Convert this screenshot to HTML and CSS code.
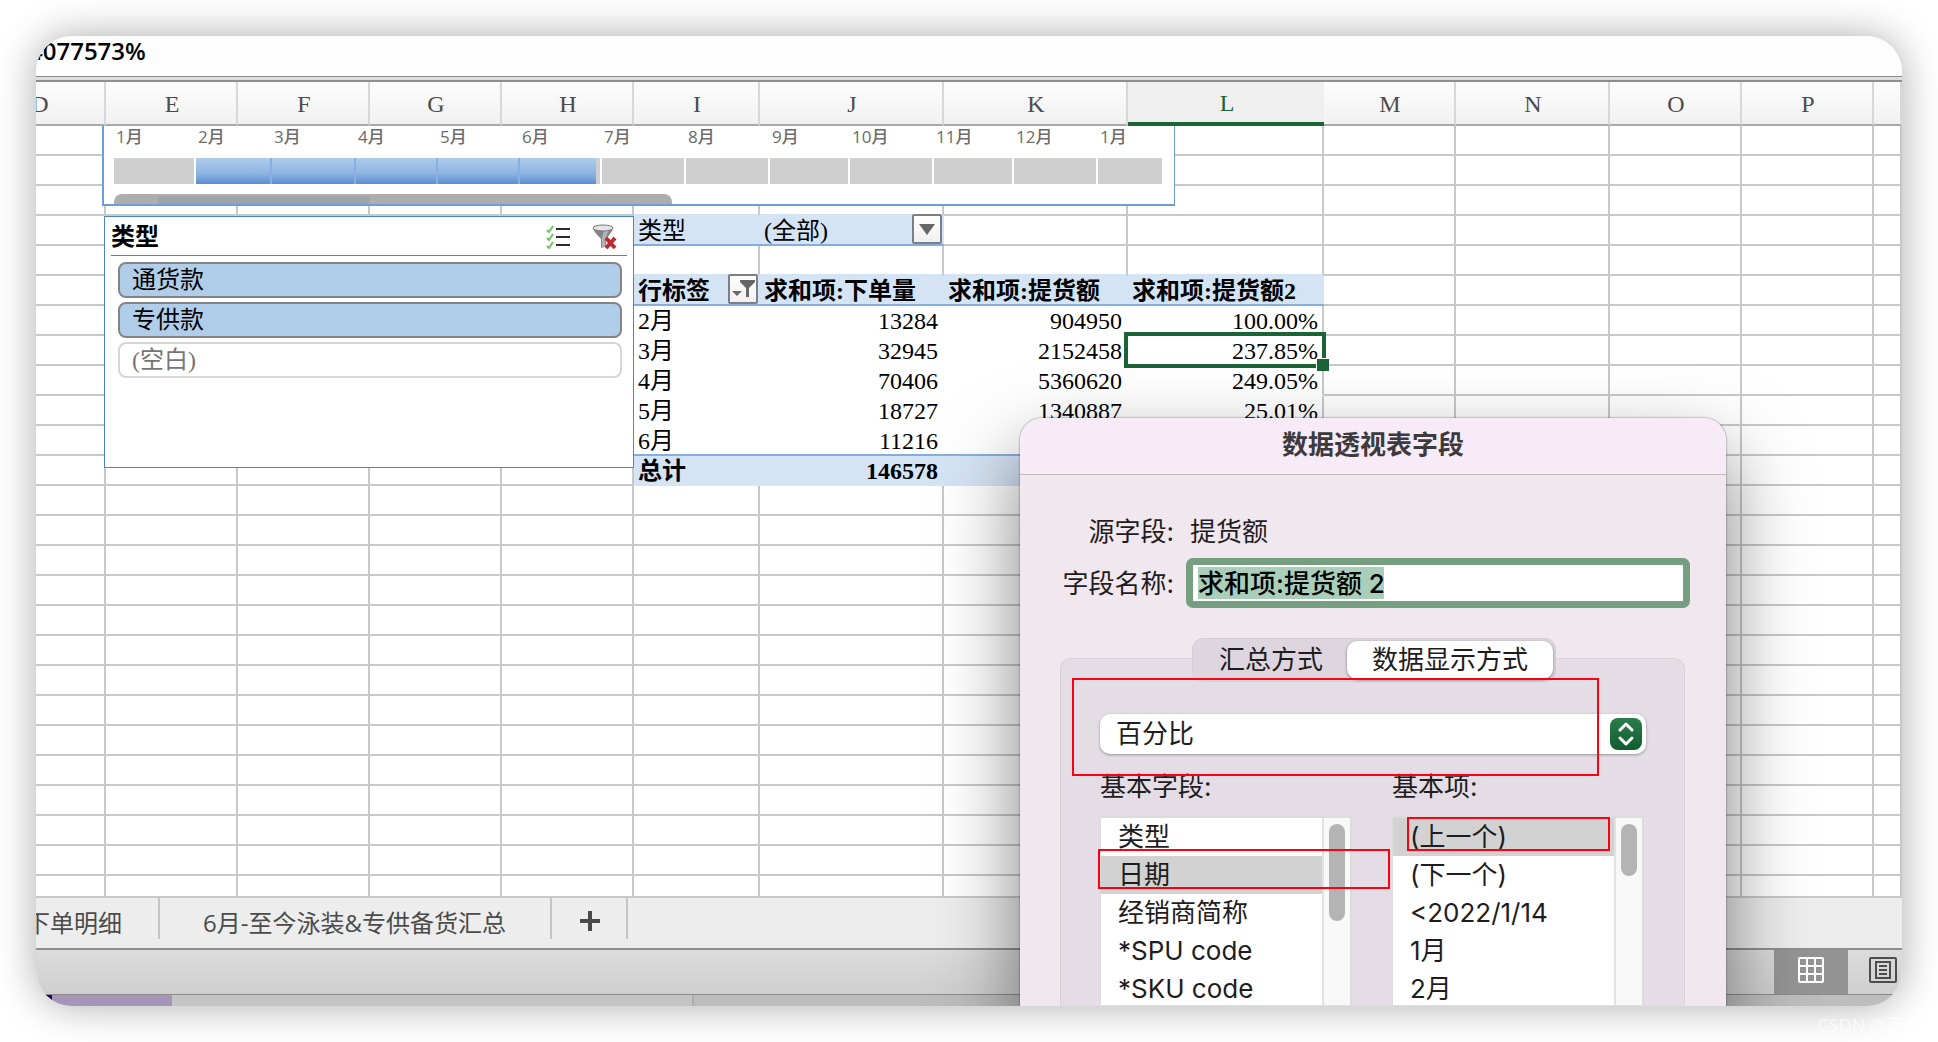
FILE: index.html
```html
<!DOCTYPE html>
<html lang="zh-CN">
<head>
<meta charset="utf-8">
<title>数据透视表</title>
<meta name="viewport" content="width=device-width, initial-scale=1">
<link rel="stylesheet" href="styles.css">
</head>
<body>
<main class="window">
  <div class="formula-bar">4077573%</div>
  <div class="divider"></div>

  <section class="sheet">
    <table class="grid">
      <colgroup>
        <col class="w132"><col class="w132"><col class="w132"><col class="w132"><col class="w132">
        <col class="w126"><col class="w184"><col class="w184"><col class="w196">
        <col class="w132"><col class="w154"><col class="w132"><col class="w132"><col>
      </colgroup>
      <thead>
        <tr><th>D</th><th>E</th><th>F</th><th>G</th><th>H</th><th>I</th><th>J</th><th>K</th><th class="active">L</th><th>M</th><th>N</th><th>O</th><th>P</th><th></th></tr>
      </thead>
      <tbody>
        <tr><td><td><td><td><td><td><td><td><td><td><td><td><td><td></tr>
        <tr><td><td><td><td><td><td><td><td><td><td><td><td><td><td></tr>
        <tr class="above-filter"><td><td><td><td><td><td><td><td><td><td><td><td><td><td></tr>
        <tr class="filter-row"><td><td><td><td><td><td class="fill">类型</td><td class="fill"><div class="cell-line">(全部)<button class="cell-button" aria-label="筛选类型"><svg width="16" height="12" viewBox="0 0 16 12"><path d="M0 1h16L8 12z" fill="#666"/></svg></button></div></td><td><td><td><td><td><td><td></tr>
        <tr class="above-head"><td><td><td><td><td><td><td><td><td><td><td><td><td><td></tr>
        <tr class="pivot-head"><td><td><td><td><td><td class="fill"><div class="cell-line">行标签<button class="cell-button" aria-label="筛选行标签"><svg width="24" height="20" viewBox="0 0 24 20"><path d="M9 1h15v2l-6 6v9h-3V9L9 3z" fill="#666"/><path d="M1 12h10l-5 5z" fill="#666"/></svg></button></div></td><td class="fill">求和项:下单量</td><td class="fill">求和项:提货额</td><td class="fill">求和项:提货额2</td><td><td><td><td><td></tr>
        <tr class="pivot-row"><td><td><td><td><td><td>2月</td><td>13284</td><td>904950</td><td>100.00%</td><td><td><td><td><td></tr>
        <tr class="pivot-row"><td><td><td><td><td><td>3月</td><td>32945</td><td>2152458</td><td class="selected">237.85%</td><td><td><td><td><td></tr>
        <tr class="pivot-row"><td><td><td><td><td><td>4月</td><td>70406</td><td>5360620</td><td>249.05%</td><td><td><td><td><td></tr>
        <tr class="pivot-row"><td><td><td><td><td><td>5月</td><td>18727</td><td>1340887</td><td>25.01%</td><td><td><td><td><td></tr>
        <tr class="pivot-row last"><td><td><td><td><td><td>6月</td><td>11216</td><td></td><td></td><td><td><td><td><td></tr>
        <tr class="pivot-total"><td><td><td><td><td><td class="fill">总计</td><td class="fill">146578</td><td class="fill"></td><td class="fill"></td><td><td><td><td><td></tr>
        <tr><td><td><td><td><td><td><td><td><td><td><td><td><td><td></tr>
        <tr><td><td><td><td><td><td><td><td><td><td><td><td><td><td></tr>
        <tr><td><td><td><td><td><td><td><td><td><td><td><td><td><td></tr>
        <tr><td><td><td><td><td><td><td><td><td><td><td><td><td><td></tr>
        <tr><td><td><td><td><td><td><td><td><td><td><td><td><td><td></tr>
        <tr><td><td><td><td><td><td><td><td><td><td><td><td><td><td></tr>
        <tr><td><td><td><td><td><td><td><td><td><td><td><td><td><td></tr>
        <tr><td><td><td><td><td><td><td><td><td><td><td><td><td><td></tr>
        <tr><td><td><td><td><td><td><td><td><td><td><td><td><td><td></tr>
        <tr><td><td><td><td><td><td><td><td><td><td><td><td><td><td></tr>
        <tr><td><td><td><td><td><td><td><td><td><td><td><td><td><td></tr>
        <tr><td><td><td><td><td><td><td><td><td><td><td><td><td><td></tr>
        <tr><td><td><td><td><td><td><td><td><td><td><td><td><td><td></tr>
        <tr class="cut"><td><td><td><td><td><td><td><td><td><td><td><td><td><td></tr>
      </tbody>
    </table>

    <div class="timeline">
      <ol class="months">
        <li>1月</li><li class="on first">2月</li><li class="on">3月</li><li class="on">4月</li><li class="on">5月</li><li class="on end">6月</li><li>7月</li><li>8月</li><li>9月</li><li>10月</li><li>11月</li><li>12月</li><li>1月</li>
      </ol>
      <div class="timeline-track"><div class="timeline-thumb"></div></div>
    </div>

    <div class="slicer">
      <header class="slicer-head">
        <h2>类型</h2>
        <button class="icon-button" aria-label="多选">
          <svg width="24" height="24" viewBox="0 0 24 24" fill="none"><path d="M1 5l2 2 4-6M1 13l2 2 4-6M1 21l2 2 4-6" stroke="#74c069" stroke-width="2"/><path d="M10 4h14M10 12h14M10 20h14" stroke="#2b2b2b" stroke-width="2"/></svg>
        </button>
        <button class="icon-button" aria-label="清除筛选器">
          <svg width="26" height="26" viewBox="0 0 26 26"><path d="M1 4q0 3 8 11v9l5-2v-7q7-8 7-11z" fill="#85858a"/><path d="M10 14l2-8 5 0-4 9v8l-3 1z" fill="#b3b3b8"/><ellipse cx="11" cy="4" rx="10" ry="3" fill="#e4e4e6" stroke="#77777b" stroke-width="1"/><path d="M14 14l9 10M23 14l-9 10" stroke="#c0292f" stroke-width="4"/></svg>
        </button>
      </header>
      <div class="slicer-items">
        <button class="slicer-item on">通货款</button>
        <button class="slicer-item on">专供款</button>
        <button class="slicer-item">(空白)</button>
      </div>
    </div>
  </section>

  <nav class="tabs">
    <button class="tab clipped">下单明细</button>
    <button class="tab">6月-至今泳装&amp;专供备货汇总</button>
    <button class="tab add" aria-label="新建工作表"><svg width="20" height="20" viewBox="0 0 20 20"><path d="M10 0v20M0 10h20" stroke="#4a4a4a" stroke-width="4"/></svg></button>
  </nav>

  <footer class="status">
    <button class="view current" aria-label="普通视图">
      <svg width="26" height="26" viewBox="0 0 26 26" fill="none" stroke="#fff" stroke-width="2"><rect x="1" y="1" width="24" height="24" rx="1"/><path d="M9 1v24M17 1v24M1 9h24M1 17h24"/></svg>
    </button>
    <button class="view" aria-label="页面布局">
      <svg width="28" height="26" viewBox="0 0 28 26" fill="none" stroke="#4d4d4d" stroke-width="2"><rect x="1" y="1" width="26" height="24" rx="1"/><rect x="7" y="5" width="14" height="16"/><path d="M10 9h8M10 13h8M10 17h8"/></svg>
    </button>
  </footer>
  <div class="desktop"><span class="navy"></span><span class="purple"></span><span class="left-part"></span><span class="right-part"></span></div>

  <form class="dialog" role="dialog" aria-labelledby="dialog-title">
    <h1 id="dialog-title">数据透视表字段</h1>
    <div class="fields">
      <span class="field-label">源字段:</span><span class="source">提货额</span>
      <label class="field-label" for="field-name">字段名称:</label><input id="field-name" type="text" value="求和项:提货额 2">
    </div>
    <div class="segments">
      <button type="button">汇总方式</button><button type="button" class="current">数据显示方式</button>
    </div>
    <div class="panel">
      <div class="popup">
        <select aria-label="数据显示方式"><option>百分比</option></select>
        <svg class="arrows" width="32" height="32" viewBox="0 0 32 32"><defs><linearGradient id="green" x2="0" y2="1"><stop stop-color="#2b7d4c"/><stop offset="1" stop-color="#115c2f"/></linearGradient></defs><rect width="32" height="32" rx="8" fill="url(#green)"/><path d="M10 12l6-6 6 6M10 20l6 6 6-6" fill="none" stroke="#fff" stroke-width="3" stroke-linecap="round" stroke-linejoin="round"/></svg>
      </div>
      <div class="lists">
        <section>
          <h3 id="base-field">基本字段:</h3>
          <div class="list-box">
            <ul role="listbox" aria-labelledby="base-field">
              <li role="option">类型</li><li role="option" aria-selected="true">日期</li><li role="option">经销商简称</li><li role="option">*SPU code</li><li role="option">*SKU code</li>
            </ul>
            <div class="scroll"><div class="thumb long"></div></div>
          </div>
        </section>
        <section>
          <h3 id="base-item">基本项:</h3>
          <div class="list-box">
            <ul role="listbox" aria-labelledby="base-item">
              <li role="option" aria-selected="true">(上一个)</li><li role="option">(下一个)</li><li role="option">&lt;2022/1/14</li><li role="option">1月</li><li role="option">2月</li>
            </ul>
            <div class="scroll"><div class="thumb"></div></div>
          </div>
        </section>
      </div>
    </div>
    <div class="mark mark-popup"></div>
    <div class="mark mark-field"></div>
    <div class="mark mark-item"></div>
  </form>
</main>
<div class="watermark">CSDN @可即</div>
</body>
</html>
```
FILE: styles.css
```css
* { box-sizing: border-box; }

:root {
  --line: #c8c8c8;
  --fill: #d5e4f5;
  --blue: #86aedd;
  --green: #1b6435;
  --sheet-font: "Liberation Serif", "Noto Sans CJK SC", serif;
  --ui-font: Inter, "Noto Sans CJK SC", sans-serif;
}

body {
  margin: 0;
  padding: 36px;
  background: #fff;
  font: 24px/30px var(--sheet-font);
  position: relative;
  overflow-x: hidden;
}

button, input, select { font: inherit; color: inherit; margin: 0; }
button { border: 0; background: none; padding: 0; }
svg { display: block; }
h1, h2, h3, ul, ol { margin: 0; padding: 0; font-weight: inherit; font-size: inherit; list-style: none; }

.window {
  position: relative;
  display: flex;
  flex-direction: column;
  overflow: hidden;
  border-radius: 36px;
  background: #fff;
  box-shadow: 0 0 40px rgba(0, 0, 0, .33);
}

/* formula bar */
.formula-bar {
  height: 40px;
  overflow: hidden;
  background: #fdfdfd;
  font: 600 24px/30px "Open Sans", sans-serif;
  text-indent: -7px;
  color: #000;
}
.divider {
  height: 6px;
  border-top: 1px solid #8a8a8a;
  border-bottom: 2px solid #8f8f8f;
  background: #dedede;
}

/* grid */
.sheet { position: relative; overflow: hidden; }
.grid {
  width: calc(100% + 62px);
  margin-left: -62px;
  table-layout: fixed;
  border-collapse: separate;
  border-spacing: 0;
}
.w126 { width: 126px; }
.w132 { width: 132px; }
.w154 { width: 154px; }
.w184 { width: 184px; }
.w196 { width: 196px; }
.grid th {
  height: 44px;
  padding: 2px 0 0 2px;
  font-weight: 400;
  color: #4c4c4c;
  background: linear-gradient(#fdfdfd, #f1f1f1);
  border-right: 2px solid #d8d8d8;
  border-bottom: 2px solid #a9a9a9;
}
.grid th.active {
  color: var(--green);
  background: #efefef;
  border-right: 0;
  border-bottom: 4px solid var(--green);
}
.grid td {
  height: 30px;
  padding: 2px 4px 0;
  line-height: 26px;
  white-space: nowrap;
  border-right: 2px solid var(--line);
  border-bottom: 2px solid var(--line);
}
.grid .cut td { height: 22px; padding: 0; }
.grid .fill { padding-right: 6px; background: var(--fill); border-right: 0; border-bottom-color: var(--fill); }
.grid .above-filter td:nth-child(6), .grid .above-filter td:nth-child(7),
.grid .above-head td:nth-child(n+6):nth-child(-n+9) { border-bottom-color: var(--fill); }
.grid .filter-row .fill { border-bottom-color: var(--blue); }
.grid .pivot-head .fill { font-weight: 700; border-bottom-color: var(--blue); }
.grid .pivot-row td:nth-child(n+6):nth-child(-n+8) { padding-right: 6px; border-right: 0; }
.grid .pivot-row td:nth-child(n+6):nth-child(-n+9) { border-bottom-color: #fff; }
.grid .pivot-row.last td:nth-child(n+6):nth-child(-n+9) { border-bottom-color: var(--blue); }
.pivot-row td:nth-child(n+7), .pivot-total td:nth-child(n+7) { text-align: right; }
.pivot-total .fill { font-weight: 700; }

.cell-line { display: flex; justify-content: space-between; height: 26px; margin-right: -4px; }
.cell-button {
  display: grid;
  place-items: center;
  width: 30px;
  height: 30px;
  margin-top: -4px;
  border: 2px solid #7b8087;
  border-radius: 2px;
  background: linear-gradient(#fff, #f0f0f0);
}

.selected { position: relative; }
.selected::before {
  content: "";
  position: absolute;
  inset: -4px -4px -4px -4px;
  border: 4px solid var(--green);
}
.selected::after {
  content: "";
  position: absolute;
  right: -7px;
  bottom: -7px;
  width: 12px;
  height: 12px;
  background: var(--green);
  border: solid #fff;
  border-width: 1px 0 0 1px;
}

/* timeline */
.timeline {
  position: absolute;
  left: 66px;
  top: 44px;
  width: 1073px;
  height: 80px;
  padding: 0 10px;
  background: #fff;
  border: 2px solid #6a9fda;
  border-top: 0;
  border-right-width: 1px;
}
.months {
  display: grid;
  grid-template-columns: 82px 76px 84px 82px 82px 82px 84px 84px 80px 84px 80px 84px 66px;
  font: 500 17px/22px "Open Sans", "Noto Sans CJK SC", sans-serif;
  color: #6b6b6b;
}
.months li { text-indent: 2px; white-space: nowrap; }
.months li::after {
  content: "";
  display: block;
  height: 26px;
  margin-top: 10px;
  margin-right: 2px;
  background: #cfcfcf;
}
.months .on::after {
  margin-right: 0;
  background: linear-gradient(#b0cdeb, #8db4e0 60%, #5a8ed0);
  border-right: 2px solid #86b0e2;
}
.months .end::after { margin-right: 2px; border-right: 4px solid #cfcfcf; }
.timeline-track {
  width: 558px;
  height: 10px;
  margin-top: 10px;
  padding: 2px 0 0 44px;
  border-radius: 8px 8px 0 0;
  background: #aeaeae;
}
.timeline-thumb { width: 212px; height: 8px; background: #9fa3aa; }

/* slicer */
.slicer {
  position: absolute;
  left: 68px;
  top: 134px;
  width: 530px;
  height: 252px;
  padding: 0 6px;
  background: #fff;
  border: 1px solid #4a86c6;
}
.slicer-head {
  display: flex;
  align-items: center;
  gap: 22px;
  height: 39px;
  padding: 2px 9px 0 0;
  border-bottom: 1px solid #4a86c6;
}
.slicer-head h2 { font-weight: 700; margin-right: auto; }
.slicer-items { display: grid; gap: 4px; padding: 6px 5px 0 7px; }
.slicer-item {
  height: 36px;
  padding: 0 12px;
  text-align: left;
  line-height: 30px;
  color: #757575;
  background: #fff;
  border: 2px solid #d6d6d6;
  border-radius: 8px;
}
.slicer-item.on { color: #000; background: #b0cdea; border-color: #848484; }

/* sheet tabs and status bar */
.tabs {
  display: flex;
  height: 50px;
  background: #ededed;
  color: #4b4b4b;
  font-family: "Open Sans", "Noto Sans CJK SC", sans-serif;
  overflow: hidden;
}
.tab {
  display: grid;
  place-items: center;
  height: 41px;
  padding: 8px 44px 0 43px;
  white-space: nowrap;
  border-right: 2px solid #c4c4c4;
}
.tab.clipped { width: 124px; padding: 8px 36px 0 0; justify-content: end; overflow: hidden; }
.tab.add { width: 76px; padding: 5px 0 0 2px; }
.status {
  display: flex;
  justify-content: flex-end;
  height: 46px;
  border-top: 2px solid #8f8f8f;
  background: linear-gradient(#dcdcdc, #cfcfcf);
}
.view { display: grid; place-items: center; width: 54px; padding: 0 0 4px 16px; }
.view.current { width: 74px; padding: 0 0 4px; background: #949494; }
.desktop {
  display: flex;
  height: 12px;
  overflow: hidden;
  border-top: 1px solid #8c8c8c;
  background: #c4c4c4;
}
.navy { width: 16px; background: #22005e; }
.purple { width: 120px; background: #a794b9; }
.left-part { width: 522px; border-right: 2px solid #adadad; }
.right-part { flex: 1; background: #bdbdbd; }

/* field dialog */
.dialog {
  position: absolute;
  left: 984px;
  top: 382px;
  bottom: 0;
  width: 706px;
  display: flex;
  flex-direction: column;
  font: 26px/38px var(--ui-font);
  color: #1e1c1e;
  background: #f0e7ef;
  border-radius: 22px 22px 0 0;
  box-shadow: 0 0 2px rgba(0, 0, 0, .6), 0 36px 80px rgba(0, 0, 0, .5);
}
.dialog h1 {
  height: 57px;
  line-height: 54px;
  text-align: center;
  font-weight: 700;
  color: #3c3a3d;
  background: #f6ebf6;
  border-bottom: 1px solid #c3b8c3;
  border-radius: 22px 22px 0 0;
}
.fields {
  display: grid;
  grid-template-columns: 114px 504px;
  grid-template-rows: 38px 50px;
  row-gap: 8px;
  column-gap: 12px;
  align-items: center;
  padding: 37px 0 0 40px;
}
.field-label { text-align: right; white-space: nowrap; padding-top: 1px; }
.source { padding: 1px 0 0 4px; }
.fields input {
  width: 100%;
  height: 50px;
  padding: 0 5px 4px;
  border: 7px solid #769e80;
  border-radius: 7px;
  font-weight: 500;
  color: #000;
  background: linear-gradient(#a9cfba, #a9cfba) 5px 2px / 186px 32px no-repeat #fff;
  outline: 0;
}
.segments {
  position: relative;
  display: flex;
  align-self: center;
  height: 44px;
  margin: 30px 0 0 2px;
  padding: 2px;
  border: 1px solid #d6cdd6;
  border-radius: 11px;
  background: #ded6de;
}
.segments button { padding: 0 24px; border-radius: 10px; }
.segments .current { padding: 0 25px; background: #fff; box-shadow: 0 1px 3px rgba(0, 0, 0, .45); }
.panel {
  flex: 1;
  margin: -24px 41px 0 40px;
  padding: 55px 38px 0 39px;
  border: 1px solid #dad1da;
  border-bottom: 0;
  border-radius: 11px 11px 0 0;
  background: #e5dde5;
}
.popup { position: relative; }
.popup select {
  display: block;
  width: 100%;
  height: 40px;
  padding: 0 44px 0 16px;
  appearance: none;
  border: 0;
  border-radius: 10px;
  background: #fff;
  box-shadow: 0 1px 3px rgba(0, 0, 0, .35);
}
.arrows { position: absolute; right: 4px; top: 4px; }
.lists { display: grid; grid-template-columns: 252px 252px; column-gap: 40px; margin-top: 14px; }
.lists h3 { height: 48px; }
.list-box {
  display: flex;
  height: 189px;
  border: solid #dcdcdc;
  border-width: 2px 2px 0 1px;
  background: #fff;
}
.list-box ul { flex: 1; overflow: hidden; }
.list-box li { height: 38px; padding-left: 17px; white-space: nowrap; }
.list-box [aria-selected] { background: #d2d2d2; }
.scroll { width: 28px; padding: 6px 5px 0; border-left: 2px solid #e2e2e2; background: #f8f8f8; }
.thumb { width: 16px; height: 52px; border-radius: 8px; background: #b4b4b4; }
.thumb.long { height: 97px; }

.mark { position: absolute; border: 2px solid #fd0012; pointer-events: none; }
.mark-popup { left: 52px; top: 260px; width: 527px; height: 98px; }
.mark-field { left: 78px; top: 431px; width: 292px; height: 40px; }
.mark-item { left: 387px; top: 399px; width: 203px; height: 34px; }

.watermark {
  position: absolute;
  right: 16px;
  bottom: 2px;
  font: 18px/30px "Open Sans", "Noto Sans CJK SC", sans-serif;
  color: rgba(255, 255, 255, .7);
}
```
